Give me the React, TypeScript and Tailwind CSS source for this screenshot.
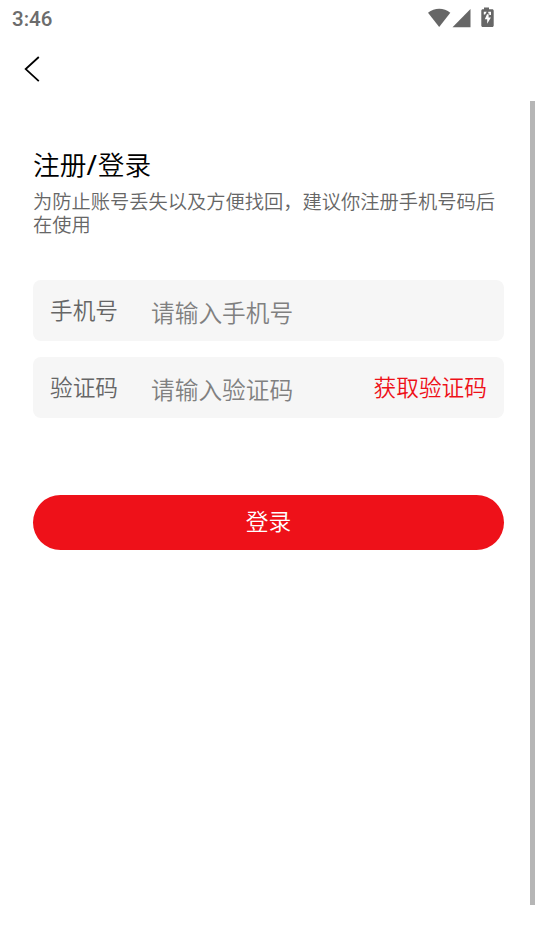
import type { ReactNode } from "react";

function StatusBar() {
  return (
    <header className="flex h-9 items-center justify-between pl-3 pr-10 text-[#666]">
      <span className="pt-px font-['Roboto',sans-serif] text-[20.5px] leading-6 font-medium text-[#6c6c6c]">3:46</span>
      <svg width="68" height="36" viewBox="0 0 68 36" fill="currentColor" aria-hidden="true">
        <path d="M1 12.8C7.500 7.300 17 7.300 23.300 12.800L12.200 27Z" />
        <path d="M25.500 27.200L43.500 9V27.200Z" />
        <path d="M57 7.500h5v1.800h3.200c.9 0 1.500.6 1.500 1.500v14.700c0 .9-.6 1.500-1.500 1.500h-9.400c-.9 0-1.500-.6-1.500-1.500V10.800c0-.9.6-1.500 1.500-1.500h1.200Z" />
        <path fill="#fff" d="M56.800 11.800h2.900l-1.600 2.600h-1.300ZM61.300 11.800h2.700v3.200h-1.700v-1.600h-1ZM60 14.300h1.600v3.200h2.300l-3.700 6.300v-4.600h-2.400Z" />
      </svg>
    </header>
  );
}

function Field({ label, placeholder, children }: { label: string; placeholder: string; children?: ReactNode }) {
  return (
    <div className="flex h-[61px] items-center rounded-lg bg-[#f6f6f6] pl-[17px] pr-[17px]">
      <label className="w-[101px] pb-px text-[22.7px] leading-8 text-[#666]">{label}</label>
      <span className="flex-1 pt-0.5 text-[23.7px] leading-8 text-[#808080]">{placeholder}</span>
      {children}
    </div>
  );
}

export default function App() {
  return (
    <div className="flex h-[951px] w-full flex-col bg-white font-['Noto_Sans_CJK_SC',sans-serif] font-[350]">
      <StatusBar />
      <nav className="flex h-[65px] items-start pl-6 pt-5">
        <button aria-label="返回">
          <svg width="16" height="27" viewBox="0 0 16 27" fill="none" stroke="#000" strokeWidth="1.8">
            <path d="M14.800 1L1.700 13.100L14.800 25.200" />
          </svg>
        </button>
      </nav>
      <div className="flex h-[804px]">
        <main className="flex-1 pl-[33px] pr-[26px] pt-[43px]">
          <h1 className="text-[26.7px] leading-10 text-black">注册<span className="pr-px font-['Noto_Sans',sans-serif] text-[28px] leading-none font-normal">/</span>登录</h1>
          <p className="mt-1.5 text-[19.25px] leading-[23px] text-[#666]">
            为防止账号丢失以及方便找回，建议你注册手机号码后
            <br />
            在使用
          </p>
          <form className="mt-11 flex flex-col">
            <Field label="手机号" placeholder="请输入手机号" />
            <div className="h-4" />
            <Field label="验证码" placeholder="请输入验证码">
              <button type="button" className="pb-px text-[22.7px] leading-8 text-[#ee1119]">获取验证码</button>
            </Field>
            <button type="button" className="mt-[77px] h-[55px] rounded-full bg-[#ee1119] pb-[3px] text-[22.7px] leading-8 text-white">登录</button>
          </form>
        </main>
        <div className="w-[5px] bg-[#b6b6b6]" />
      </div>
    </div>
  );
}
